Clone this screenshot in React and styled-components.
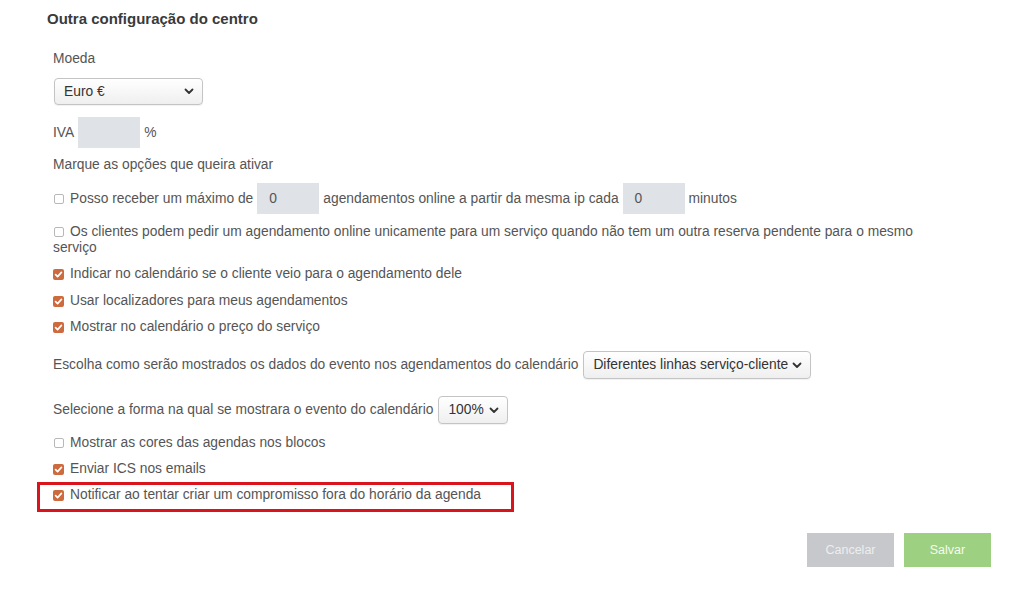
import React from 'react';
import styled, { createGlobalStyle } from 'styled-components';

const Global = createGlobalStyle`
  body {
    margin: 0;
    background: #ffffff;
    font-family: "Liberation Sans", Arial, sans-serif;
  }
`

const Page = styled.div`
  width: 1024px;
  height: 598px;
  box-sizing: border-box;
  padding: 10px 33px 0 47px;
  color: #555;
  font-size: 13.8px;
`

const Title = styled.h3`
  margin: 0;
  font-size: 15px;
  line-height: 18px;
  font-weight: bold;
  color: #3a3a3a;
`

const Body = styled.div`
  padding-left: 6px;
  max-width: 898px;
`

const Label = styled.div`
  line-height: 16px;
  margin-top: ${p => p.top || 0}px;
`

const Line = styled.div`
  display: flex;
  align-items: center;
  gap: ${p => p.gap || 4}px;
  margin-top: ${p => p.top || 0}px;
  line-height: 16px;
`

const Input = styled.div`
  box-sizing: border-box;
  width: 62px;
  height: 31px;
  padding-left: 12px;
  background: #dfe2e6;
  color: #555;
  display: flex;
  align-items: center;
`

const Select = styled.div`
  box-sizing: border-box;
  width: ${p => p.w}px;
  height: ${p => p.h || 28}px;
  margin-left: ${p => p.ml || 0}px;
  padding: 0 8px 0 9px;
  border: 1px solid #c4c4c4;
  border-radius: 4px;
  background: linear-gradient(#ffffff, #efefef);
  color: #333;
  display: flex;
  align-items: center;
  justify-content: space-between;
  box-shadow: 0 1px 1px rgba(0,0,0,0.06);
`

const Chevron = () => (
  <svg width="10" height="7" viewBox="0 0 10 7">
    <polyline points="1.5,1.5 5,5 8.5,1.5" fill="none" stroke="#333" strokeWidth="1.8" strokeLinecap="round" strokeLinejoin="round" />
  </svg>
)

const Box = styled.span`
  flex: none;
  box-sizing: border-box;
  width: ${p => (p.checked ? 11 : 10)}px;
  height: ${p => (p.checked ? 11 : 10)}px;
  margin: 0 6px 0 ${p => (p.checked ? 0 : 1)}px;
  border-radius: 2px;
  border: ${p => (p.checked ? 'none' : '1px solid #b8b8b8')};
  background: ${p => (p.checked ? '#cd6a3e' : '#fff')};
  display: inline-flex;
  align-items: center;
  justify-content: center;
  vertical-align: -1px;
`

const Check = ({ checked }) => (
  <Box checked={checked}>
    {checked && (
      <svg width="9" height="9" viewBox="0 0 9 9">
        <polyline points="1.6,4.6 3.6,6.6 7.4,2.4" fill="none" stroke="#fff" strokeWidth="1.7" strokeLinecap="round" strokeLinejoin="round" />
      </svg>
    )}
  </Box>
)

const CheckRow = styled.div`
  position: relative;
  display: flex;
  align-items: center;
  line-height: 16px;
  margin-top: ${p => p.top || 0}px;
`

const Wrapped = styled.div`
  line-height: 16px;
  margin-top: ${p => p.top || 0}px;
`

const Highlight = styled.span`
  position: absolute;
  left: -16px;
  top: -5px;
  width: 477px;
  height: 30px;
  box-sizing: border-box;
  border: 3px solid #d9141c;
  pointer-events: none;
`

const Actions = styled.div`
  display: flex;
  justify-content: flex-end;
  gap: 10px;
  margin-top: 30px;
`

const Button = styled.button`
  width: 87px;
  height: 34px;
  border: none;
  border-radius: 0;
  font-family: "Liberation Sans", Arial, sans-serif;
  font-size: 12.5px;
  color: ${p => (p.primary ? '#f4fbef' : '#eceef0')};
  background: ${p => (p.primary ? '#9dd080' : '#c6c8cc')};
`

export default function App() {
  return (
    <Page>
      <Global />
      <Title>Outra configuração do centro</Title>
      <Body>
        <Label top={23}>Moeda</Label>
        <Line top={11}>
          <Select w={149} h={27} ml={1}>
            <span>Euro €</span>
            <Chevron />
          </Select>
        </Line>
        <Line top={12}>
          <span>IVA</span>
          <Input />
          <span>%</span>
        </Line>
        <Label top={9}>Marque as opções que queira ativar</Label>
        <Line top={10} gap={4}>
          <span style={{ display: 'flex', alignItems: 'center' }}>
            <Check />Posso receber um máximo de
          </span>
          <Input>0</Input>
          <span>agendamentos online a partir da mesma ip cada</span>
          <Input>0</Input>
          <span>minutos</span>
        </Line>
        <Wrapped top={10}>
          <Check />Os clientes podem pedir um agendamento online unicamente para um serviço quando não tem um outra reserva pendente para o mesmo serviço
        </Wrapped>
        <CheckRow top={10}><Check checked />Indicar no calendário se o cliente veio para o agendamento dele</CheckRow>
        <CheckRow top={11}><Check checked />Usar localizadores para meus agendamentos</CheckRow>
        <CheckRow top={10}><Check checked />Mostrar no calendário o preço do serviço</CheckRow>
        <Line top={16} gap={5}>
          <span>Escolha como serão mostrados os dados do evento nos agendamentos do calendário</span>
          <Select w={228}>
            <span>Diferentes linhas serviço-cliente</span>
            <Chevron />
          </Select>
        </Line>
        <Line top={17} gap={5}>
          <span>Selecione a forma na qual se mostrara o evento do calendário</span>
          <Select w={70}>
            <span>100%</span>
            <Chevron />
          </Select>
        </Line>
        <CheckRow top={11}><Check />Mostrar as cores das agendas nos blocos</CheckRow>
        <CheckRow top={10}><Check checked />Enviar ICS nos emails</CheckRow>
        <CheckRow top={10}>
          <Check checked />Notificar ao tentar criar um compromisso fora do horário da agenda
          <Highlight />
        </CheckRow>
      </Body>
      <Actions>
        <Button>Cancelar</Button>
        <Button primary>Salvar</Button>
      </Actions>
    </Page>
  );
}
